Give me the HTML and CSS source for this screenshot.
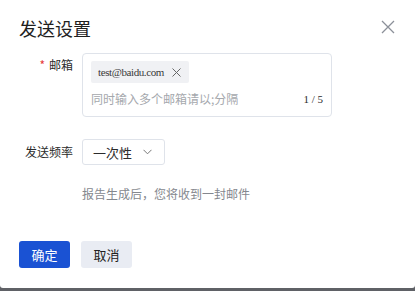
FILE: index.html
```html
<!DOCTYPE html>
<html lang="zh-CN">
<head>
    <meta charset="UTF-8">
    <title>发送设置</title>
    <link rel="stylesheet" href="styles.css">
</head>
<body>
    <div class="modal">
        <div class="modal-header">
            <h2 class="modal-title">发送设置</h2>
            <button class="close-btn" aria-label="关闭">
                <svg width="14" height="14" viewBox="0 0 14 14">
                    <path d="M1 1 L13 13 M13 1 L1 13" stroke="#8c9099" stroke-width="1.3" fill="none"/>
                </svg>
            </button>
        </div>

        <div class="form">
            <div class="form-row form-row-top">
                <label class="form-label"><span class="required">*</span>邮箱</label>
                <div class="email-box">
                    <div class="tags">
                        <span class="tag">test@baidu.com
                            <svg width="9" height="9" viewBox="0 0 9 9">
                                <path d="M0.5 0.5 L8.5 8.5 M8.5 0.5 L0.5 8.5" stroke="#666" stroke-width="1" fill="none"/>
                            </svg>
                        </span>
                    </div>
                    <div class="email-input-line">
                        <span class="placeholder">同时输入多个邮箱请以;分隔</span>
                        <span class="counter">1 / 5</span>
                    </div>
                </div>
            </div>

            <div class="form-row form-row-center">
                <label class="form-label">发送频率</label>
                <div class="select">
                    <span>一次性</span>
                    <svg width="9" height="6" viewBox="0 0 9 6">
                        <path d="M0.5 0.8 L4.5 4.8 L8.5 0.8" stroke="#777" stroke-width="1" fill="none"/>
                    </svg>
                </div>
            </div>

            <p class="hint">报告生成后，您将收到一封邮件</p>
        </div>

        <div class="modal-footer">
            <button class="btn btn-primary">确定</button>
            <button class="btn btn-default">取消</button>
        </div>
    </div>
</body>
</html>
```

FILE: styles.css
```css
* {
    margin: 0;
    padding: 0;
    box-sizing: border-box;
}

body {
    font-family: "Noto Sans CJK SC", "Noto Sans", sans-serif;
    color: #1f1f1f;
    background-color: #5f6166;
    width: 415px;
    height: 291px;
    overflow: hidden;
}

.modal {
    width: 415px;
    height: 288px;
    background-color: #ffffff;
    border-radius: 0 0 3px 3px;
    padding: 15px 19px 0;
}

/* Header */
.modal-header {
    display: flex;
    justify-content: space-between;
    align-items: flex-start;
    height: 26px;
}

.modal-title {
    font-size: 18px;
    font-weight: normal;
    line-height: 26px;
}

.close-btn {
    border: none;
    background: none;
    margin-top: 5px;
    margin-right: 1px;
    display: flex;
}

/* Form */
.form {
    margin-top: 12px;
}

.form-row {
    display: flex;
    gap: 9px;
}

.form-row-center {
    align-items: center;
    margin-top: 22px;
}

.form-label {
    width: 54px;
    flex-shrink: 0;
    text-align: right;
    font-size: 12px;
    line-height: 20px;
    color: #2b2b2b;
}

.form-row-top .form-label {
    padding-top: 2px;
}

.required {
    color: #e5383b;
    margin-right: 4px;
}

.email-box {
    width: 250px;
    height: 64px;
    border: 1px solid #dfe3ea;
    border-radius: 4px;
    padding: 7px 8px 8px;
}

.tags {
    display: flex;
}

.tag {
    display: inline-flex;
    align-items: center;
    gap: 8px;
    height: 22px;
    padding: 0 8px 0 7px;
    background-color: #f0f1f4;
    border-radius: 2px;
    font-family: "Liberation Serif", serif;
    font-size: 11px;
    letter-spacing: -0.4px;
    color: #3a3a3a;
}

.email-input-line {
    display: flex;
    justify-content: space-between;
    align-items: center;
    margin-top: 7px;
    line-height: 18px;
}

.placeholder {
    font-size: 12px;
    color: #a5a8ad;
}

.counter {
    font-family: "Liberation Serif", serif;
    font-size: 11px;
    color: #2b2b2b;
}

.select {
    width: 83px;
    height: 26px;
    border: 1px solid #dfe3ea;
    border-radius: 3px;
    display: flex;
    align-items: center;
    justify-content: space-between;
    padding: 0 12px 0 10px;
    font-size: 13px;
    color: #2b2b2b;
}

.hint {
    margin: 20px 0 0 63px;
    font-size: 12px;
    line-height: 18px;
    color: #85888e;
}

/* Footer */
.modal-footer {
    display: flex;
    gap: 11px;
    margin-top: 38px;
}

.btn {
    width: 51px;
    height: 27px;
    border: none;
    border-radius: 3px;
    font-family: "Noto Sans CJK SC", sans-serif;
    font-size: 13px;
    cursor: pointer;
}

.btn-primary {
    background-color: #1a52d3;
    color: #ffffff;
}

.btn-default {
    background-color: #e9ecf3;
    color: #222222;
}
```
